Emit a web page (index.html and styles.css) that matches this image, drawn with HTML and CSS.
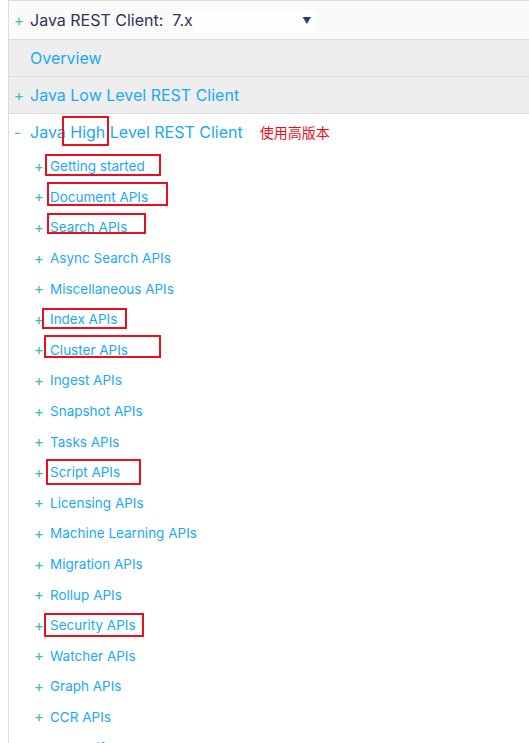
FILE: index.html
```html
<!DOCTYPE html>
<html>
<head>
<meta charset="utf-8">
<link rel="stylesheet" href="styles.css">
</head>
<body>
<div class="page">
  <nav class="sidebar">
    <div class="row row-version">
      <span class="toggle">+</span>
      <span class="label-dark">Java REST Client:</span>
      <span class="select"><span class="select-value">7.x</span><span class="caret">▼</span></span>
    </div>
    <div class="row row-grey">
      <span class="toggle"></span>
      <a class="link">Overview</a>
    </div>
    <div class="row row-grey">
      <span class="toggle">+</span>
      <a class="link">Java Low Level REST Client</a>
    </div>
    <div class="row row-open">
      <span class="toggle">-</span>
      <a class="link">Java High Level REST Client</a>
      <span class="note">使用高版本</span>
    </div>
    <ul class="items">
      <li class="item"><span class="toggle-sm">+</span><a class="link-sm">Getting started</a></li>
      <li class="item"><span class="toggle-sm">+</span><a class="link-sm">Document APIs</a></li>
      <li class="item"><span class="toggle-sm">+</span><a class="link-sm">Search APIs</a></li>
      <li class="item"><span class="toggle-sm">+</span><a class="link-sm">Async Search APIs</a></li>
      <li class="item"><span class="toggle-sm">+</span><a class="link-sm">Miscellaneous APIs</a></li>
      <li class="item"><span class="toggle-sm">+</span><a class="link-sm">Index APIs</a></li>
      <li class="item"><span class="toggle-sm">+</span><a class="link-sm">Cluster APIs</a></li>
      <li class="item"><span class="toggle-sm">+</span><a class="link-sm">Ingest APIs</a></li>
      <li class="item"><span class="toggle-sm">+</span><a class="link-sm">Snapshot APIs</a></li>
      <li class="item"><span class="toggle-sm">+</span><a class="link-sm">Tasks APIs</a></li>
      <li class="item"><span class="toggle-sm">+</span><a class="link-sm">Script APIs</a></li>
      <li class="item"><span class="toggle-sm">+</span><a class="link-sm">Licensing APIs</a></li>
      <li class="item"><span class="toggle-sm">+</span><a class="link-sm">Machine Learning APIs</a></li>
      <li class="item"><span class="toggle-sm">+</span><a class="link-sm">Migration APIs</a></li>
      <li class="item"><span class="toggle-sm">+</span><a class="link-sm">Rollup APIs</a></li>
      <li class="item"><span class="toggle-sm">+</span><a class="link-sm">Security APIs</a></li>
      <li class="item"><span class="toggle-sm">+</span><a class="link-sm">Watcher APIs</a></li>
      <li class="item"><span class="toggle-sm">+</span><a class="link-sm">Graph APIs</a></li>
      <li class="item"><span class="toggle-sm">+</span><a class="link-sm">CCR APIs</a></li>
      <li class="item"><span class="toggle-sm">+</span><a class="link-sm">Index Lifecycle Management APIs</a></li>
    </ul>
  </nav>
  <div class="marks">
    <div class="mark" style="left:62px;top:116px;width:47px;height:30px"></div>
    <div class="mark" style="left:45px;top:154px;width:116px;height:22px"></div>
    <div class="mark" style="left:47px;top:182px;width:121px;height:24px"></div>
    <div class="mark" style="left:47px;top:213px;width:99px;height:21px"></div>
    <div class="mark" style="left:42px;top:308px;width:85px;height:21px"></div>
    <div class="mark" style="left:44px;top:335px;width:117px;height:23px"></div>
    <div class="mark" style="left:46px;top:459px;width:95px;height:26px"></div>
    <div class="mark" style="left:44px;top:613px;width:100px;height:24px"></div>
  </div>
</div>
</body>
</html>
```
FILE: styles.css
```css
html, body {
  margin: 0;
  padding: 0;
  background: #ffffff;
  overflow: hidden;
}
body {
  font-family: "Inter", "Noto Sans", "Noto Sans CJK SC", sans-serif;
}
.page {
  position: relative;
  width: 529px;
  height: 743px;
  overflow: hidden;
}
.sidebar {
  margin-left: 8px;
  border-left: 1px solid #dcdcdc;
  min-height: 800px;
}
.row {
  display: flex;
  align-items: center;
  padding-left: 5px;
  font-size: 16px;
  box-sizing: border-box;
}
.row-version {
  height: 40px;
  border-top: 1px solid #dcdcdc;
  border-bottom: 1px solid #dcdcdc;
  background: #fafafa;
}
.row-grey {
  height: 37px;
  border-bottom: 1px solid #dcdcdc;
  background: #eeeeee;
}
.row-open {
  height: 36px;
  background: #ffffff;
}
.toggle {
  width: 16px;
  flex: none;
  color: #3ebeb0;
  font-size: 15px;
  line-height: 1;
}
.label-dark {
  color: #2e3656;
}
.select {
  display: flex;
  align-items: center;
  margin-left: 5px;
  width: 149px;
  height: 21px;
  background: #fefefe;
  padding-left: 4px;
  box-sizing: border-box;
}
.select-value {
  color: #2e3656;
  flex: 1;
}
.caret {
  color: #2c3b7a;
  font-size: 9px;
  margin-right: 6px;
}
.link {
  color: #1ba9f5;
  text-decoration: none;
}
.note {
  color: #e8101e;
  font-size: 14px;
  margin-left: 17px;
}
.items {
  list-style: none;
  margin: 0;
  padding: 1px 0 0 25px;
}
.item {
  display: flex;
  align-items: center;
  height: 30.6px;
  font-size: 13.5px;
}
.toggle-sm {
  width: 16px;
  flex: none;
  color: #3ebeb0;
  font-size: 15px;
  line-height: 1;
}
.link-sm {
  color: #1ba9f5;
  text-decoration: none;
}
.marks {
  position: absolute;
  left: 0;
  top: 0;
}
.mark {
  position: absolute;
  border: 2px solid #e8101e;
  box-sizing: border-box;
}
```
